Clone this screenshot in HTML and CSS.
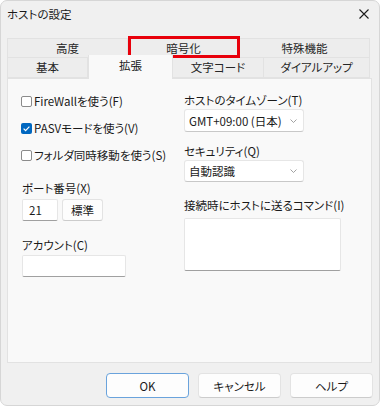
FILE: index.html
```html
<!DOCTYPE html>
<html lang="ja">
<head>
    <meta charset="UTF-8">
    <title>ホストの設定</title>
    <link rel="stylesheet" href="styles.css">
</head>
<body>
    <div class="window">
        <div class="titlebar">
            <span class="title">ホストの設定</span>
            <svg class="close" width="10" height="10" viewBox="0 0 10 10">
                <path d="M0.5 0.5 L9.5 9.5 M9.5 0.5 L0.5 9.5" stroke="#1b1b1b" stroke-width="1.1" fill="none"/>
            </svg>
        </div>

        <div class="tabs">
            <div class="tab-row">
                <div class="tab w121">高度</div>
                <div class="tab w112">暗号化</div>
                <div class="tab w130">特殊機能</div>
            </div>
            <div class="tab-row">
                <div class="tab w81">基本</div>
                <div class="tab w85 active">拡張</div>
                <div class="tab w91">文字コード</div>
                <div class="tab w106">ダイアルアップ</div>
            </div>
            <!-- red marker around the tab -->
            <div class="highlight"></div>
        </div>

        <div class="panel">
            <div class="col left-col">
                <label class="check"><span class="box"></span>FireWallを使う(F)</label>
                <label class="check row2"><span class="box checked">
                    <svg width="11" height="11" viewBox="0 0 11 11"><path d="M2.6 5.6 L4.6 7.6 L8.4 3.6" stroke="#fff" stroke-width="1.2" fill="none"/></svg>
                </span>PASVモードを使う(V)</label>
                <label class="check row2"><span class="box"></span>フォルダ同時移動を使う(S)</label>

                <div class="label port-label">ポート番号(X)</div>
                <div class="port-row">
                    <div class="field port">21</div>
                    <button class="btn small">標準</button>
                </div>

                <div class="label account-label">アカウント(C)</div>
                <div class="field account"></div>
            </div>

            <div class="col right-col">
                <div class="label">ホストのタイムゾーン(T)</div>
                <div class="select tz">
                    <span>GMT+09:00 (日本)</span>
                    <svg width="7" height="4" viewBox="0 0 7 4"><path d="M0.5 0.5 L3.5 3.5 L6.5 0.5" stroke="#8a8a8a" stroke-width="0.8" fill="none"/></svg>
                </div>

                <div class="label sec-label">セキュリティ(Q)</div>
                <div class="select sec">
                    <span>自動認識</span>
                    <svg width="7" height="4" viewBox="0 0 7 4"><path d="M0.5 0.5 L3.5 3.5 L6.5 0.5" stroke="#8a8a8a" stroke-width="0.8" fill="none"/></svg>
                </div>

                <div class="label cmd-label">接続時にホストに送るコマンド(I)</div>
                <div class="field command"></div>
            </div>
        </div>

        <div class="footer">
            <button class="btn primary">OK</button>
            <button class="btn">キャンセル</button>
            <button class="btn">ヘルプ</button>
        </div>
    </div>
</body>
</html>
```

FILE: styles.css
```css
/* Windows 11 style dialog */
* {
    box-sizing: border-box;
}

body {
    margin: 0;
    background-color: #ffffff;
    color: #1a1a1a;
    font-family: "Noto Sans CJK JP", "Noto Sans", sans-serif;
    font-size: 11.5px;
    font-feature-settings: "palt";
}

.window {
    width: 380px;
    height: 406px;
    background-color: #f0f0f0;
    border: 1px solid #d6d6d6;
    border-radius: 7px;
}

.titlebar {
    display: flex;
    justify-content: space-between;
    align-items: flex-start;
    height: 37px;
    padding: 5px 10px 0 6px;
}

.title {
    line-height: 16px;
}

.close {
    margin-top: 3px;
}

/* Tabs */
.tabs {
    position: relative;
    margin-left: 6px;
    width: 365px;
}

.tab-row {
    display: flex;
    align-items: flex-start;
    height: 20px;
}

.tab {
    height: 20px;
    line-height: 18px;
    text-align: center;
    color: #262626;
    background-color: #ededed;
    border: 1px solid #e2e2e2;
    border-left: none;
}

.tab:first-child {
    border-left: 1px solid #e2e2e2;
}

.tab-row + .tab-row .tab {
    border-top: none;
}

.tab.active {
    position: relative;
    z-index: 1;
    height: 24px;
    margin-top: -3px;
    line-height: 20px;
    background-color: #f9f9f9;
    border: 1px solid #e2e2e2;
    border-bottom: none;
    color: #1a1a1a;
}

.w121 { width: 121px; }
.w112 { width: 112px; }
.w130 { width: 130px; }
.w81 { width: 81px; }
.w85 { width: 85px; }
.w91 { width: 91px; }
.w106 { width: 106px; }

.highlight {
    position: absolute;
    left: 121px;
    top: -2px;
    width: 112px;
    height: 22px;
    border: 3px solid #e8000b;
}

/* Page panel */
.panel {
    display: grid;
    grid-template-columns: 163px 1fr;
    margin-left: 6px;
    width: 365px;
    height: 285px;
    background-color: #f9f9f9;
    border: 1px solid #e2e2e2;
    padding-left: 13px;
}

.col {
    display: flex;
    flex-direction: column;
    align-items: flex-start;
}

.left-col {
    padding-top: 14px;
}

.right-col {
    padding-top: 13px;
}

.label {
    line-height: 16px;
}

.check {
    display: flex;
    align-items: center;
    gap: 2px;
    line-height: 16px;
}

.check.row2 {
    margin-top: 11px;
}

.box {
    width: 11px;
    height: 11px;
    border: 1px solid #8b8b8b;
    border-radius: 2px;
    background-color: #ffffff;
}

.box.checked {
    border: none;
    background-color: #0067c0;
}

.box svg {
    display: block;
}

.port-label {
    margin-top: 17px;
    margin-left: 1px;
}

.port-row {
    display: flex;
    gap: 4px;
    margin-top: 3px;
    margin-left: 1px;
}

.account-label {
    margin-top: 16px;
    margin-left: 1px;
}

/* Inputs */
.field {
    background-color: #ffffff;
    border: 1px solid #e6e6e6;
    border-bottom-color: #a0a0a0;
    border-radius: 2px;
}

.port {
    width: 36px;
    height: 22px;
    padding-left: 6px;
    line-height: 20px;
}

.account {
    width: 104px;
    height: 22px;
    margin-top: 2px;
    margin-left: 1px;
}

.select {
    display: flex;
    justify-content: space-between;
    align-items: center;
    width: 120px;
    height: 23px;
    margin-top: 1px;
    padding: 0 6px 0 4px;
    background-color: #ffffff;
    border: 1px solid #e6e6e6;
    border-bottom-color: #c8c8c8;
    border-radius: 3px;
}

.select.sec {
    height: 22px;
}

.sec-label {
    margin-top: 11px;
}

.cmd-label {
    margin-top: 15px;
}

.command {
    width: 157px;
    height: 53px;
    margin-top: 5px;
}

/* Buttons */
.btn {
    font-family: inherit;
    font-size: 11.5px;
    font-feature-settings: "palt";
    color: #1a1a1a;
    width: 83px;
    height: 25px;
    padding: 0;
    background-color: #fdfdfd;
    border: 1px solid #e3e3e3;
    border-bottom-color: #cccccc;
    border-radius: 4px;
}

.btn.small {
    width: 41px;
    height: 22px;
    border-radius: 3px;
}

.btn.primary {
    border: 1px solid #6aa3dc;
}

.footer {
    display: flex;
    justify-content: flex-end;
    gap: 9px;
    margin-top: 10px;
    padding-right: 6px;
}
```
